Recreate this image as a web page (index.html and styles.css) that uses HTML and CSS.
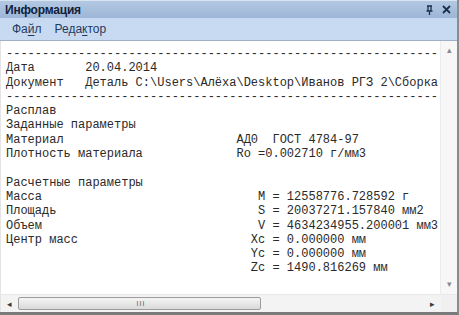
FILE: index.html
```html
<!DOCTYPE html>
<html lang="ru">
<head>
  <meta charset="UTF-8">
  <title>Информация</title>
  <link rel="stylesheet" href="styles.css">
</head>
<body>
  <div class="panel">
    <div class="titlebar">
      <span class="title">Информация</span>
      <span class="tools">
        <svg class="pin" width="9" height="10" viewBox="0 0 9 10">
          <path d="M2 1h5M3 1v5M6 1v5M1.5 6h6M4.5 6v4" stroke="#1b2f4d" stroke-width="1.3" fill="none"/>
        </svg>
        <svg class="close" width="9" height="9" viewBox="0 0 9 9">
          <path d="M1 1l7 7M8 1l-7 7" stroke="#1b2f4d" stroke-width="1.8"/>
        </svg>
      </span>
    </div>
    <div class="menubar">
      <span class="menu-item">Фа<u>й</u>л</span>
      <span class="menu-item">Реда<u>к</u>тор</span>
    </div>
    <div class="view">
      <div class="text-area">
<pre class="report">------------------------------------------------------------
Дата       20.04.2014
Документ   Деталь C:\Users\Алёха\Desktop\Иванов РГЗ 2\Сборка
------------------------------------------------------------
Расплав
Заданные параметры
Материал                        АД0  ГОСТ 4784-97
Плотность материала             Ro =0.002710 г/мм3

Расчетные параметры
Масса                              M = 12558776.728592 г
Площадь                            S = 20037271.157840 мм2
Объем                              V = 4634234955.200001 мм3
Центр масс                        Xc = 0.000000 мм
                                  Yc = 0.000000 мм
                                  Zc = 1490.816269 мм</pre>
      </div>
      <div class="vscroll">
        <span class="arrow">&#9652;</span>
        <span class="arrow">&#9662;</span>
      </div>
    </div>
    <div class="hscroll">
      <span class="arrow">&#9666;</span>
      <div class="track">
        <div class="thumb"><span class="grip">III</span></div>
      </div>
      <span class="arrow">&#9656;</span>
      <span class="corner"></span>
    </div>
  </div>
</body>
</html>
```

FILE: styles.css
```css
body {
  margin: 0;
  background: #ffffff;
  font-family: 'Liberation Sans', Arial, sans-serif;
}

.panel {
  width: 457px;
  height: 312px;
  display: flex;
  flex-direction: column;
  border-right: 2px solid #8c8c8c;
  border-bottom: 3px solid #7a7a7a;
  background: #ffffff;
}

.titlebar {
  height: 18px;
  display: flex;
  align-items: center;
  justify-content: space-between;
  padding: 0 6px 0 5px;
  background: linear-gradient(#b3c8e2, #9db6d6);
  border-top: 1px solid #d8e4f2;
  box-sizing: border-box;
}

.title {
  font-weight: bold;
  font-size: 12px;
  color: #10223c;
  letter-spacing: -0.2px;
}

.tools {
  display: flex;
  align-items: center;
  gap: 8px;
}

.menubar {
  height: 22px;
  display: flex;
  align-items: center;
  gap: 13px;
  padding-left: 12px;
  background: #c8daf1;
  border-bottom: 1px solid #9fb0c6;
}

.menu-item {
  font-size: 12px;
  color: #1e3a61;
}

.menu-item u {
  text-decoration-thickness: 1px;
  text-underline-offset: 2px;
}

.view {
  flex: 1;
  display: flex;
  min-height: 0;
  border-left: 1px solid #e4e4e4;
}

.text-area {
  flex: 1;
  overflow: hidden;
  padding: 6px 0 0 5px;
}

.report {
  margin: 0;
  font-family: 'Liberation Mono', 'Courier New', monospace;
  font-size: 12px;
  line-height: 14.3px;
  color: #2a2a2a;
  white-space: pre;
}

.vscroll {
  width: 16px;
  display: flex;
  flex-direction: column;
  justify-content: space-between;
  align-items: center;
  padding: 3px 0 4px;
  background: #f7f7f7;
  border-left: 1px solid #ececec;
}

.arrow {
  font-size: 9px;
  color: #8a8a8a;
  line-height: 12px;
}

.hscroll {
  height: 17px;
  display: flex;
  align-items: center;
  background: #f3f3f3;
  border-left: 1px solid #e4e4e4;
  border-top: 1px solid #e8e8e8;
}

.hscroll .arrow {
  width: 17px;
  text-align: center;
  color: #3a3a3a;
}

.track {
  flex: 1;
  height: 15px;
  display: flex;
}

.thumb {
  width: 243px;
  height: 13px;
  margin-top: 1px;
  display: flex;
  align-items: center;
  justify-content: center;
  border: 1px solid #9c9c9c;
  border-radius: 2px;
  background: linear-gradient(#f4f4f4, #dadada);
  box-sizing: border-box;
}

.grip {
  font-size: 7px;
  letter-spacing: 1px;
  color: #555;
  padding-left: 3px;
}

.corner {
  width: 16px;
  height: 17px;
  background: #f0f0f0;
}
```
